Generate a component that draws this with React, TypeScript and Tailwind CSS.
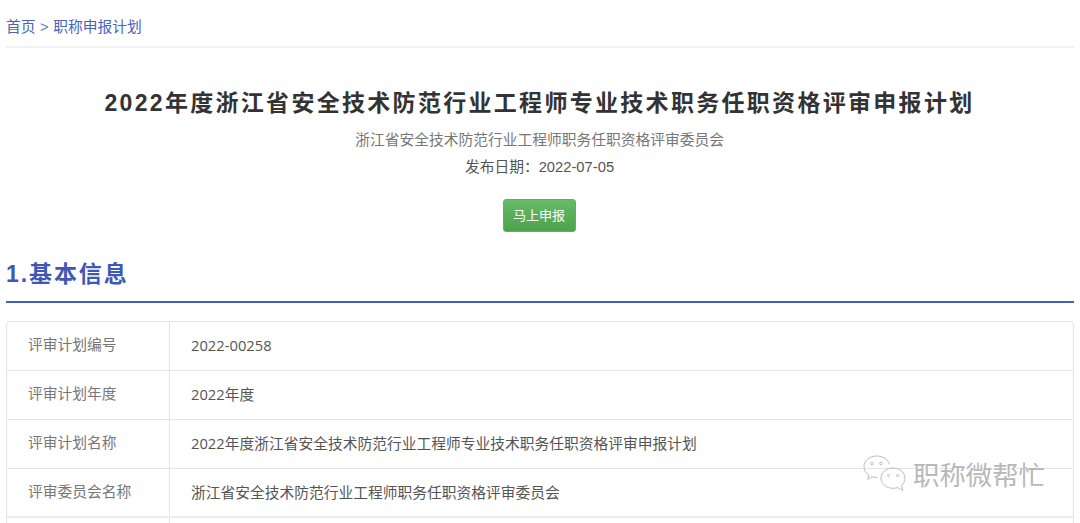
const FONT = "font-['Liberation_Sans','Noto_Sans_CJK_SC',sans-serif]";

const rows: [string, string][] = [
  ["评审计划编号", "2022-00258"],
  ["评审计划年度", "2022年度"],
  ["评审计划名称", "2022年度浙江省安全技术防范行业工程师专业技术职务任职资格评审申报计划"],
  ["评审委员会名称", "浙江省安全技术防范行业工程师职务任职资格评审委员会"],
  ["", ""],
];

function Bubbles() {
  return (
    <svg width="44" height="40" viewBox="0 0 44 40" fill="none" stroke="#bdbdbd" strokeWidth="1">
      <path d="M14.500 24.300C12.800 24.500 11 24.300 9.200 23.800L4.800 26.300L5.800 22C2.600 20 1 17 1 13.500C1 7.500 7 3 13.500 3C19.800 3 25 6.300 26.500 11.300" />
      <path d="M38.500 32.500L40 37.500L34.500 34.600C33 35.100 31.500 35.300 30 35.300C23.500 35.300 18 30.800 18 25.200C18 19.500 23.500 15 30 15C36.500 15 42 19.500 42 25.200C42 28 40.700 30.500 38.500 32.500Z" />
      <circle cx="9" cy="10.500" r="1.300" />
      <circle cx="18" cy="10.500" r="1.300" />
      <circle cx="25.500" cy="22.500" r="1" />
      <circle cx="34.500" cy="22.500" r="1" />
    </svg>
  );
}

export default function App() {
  return (
    <div className={`relative h-[523px] w-[1080px] overflow-hidden bg-white ${FONT}`}>
      <div className="px-[6px]">
        <div className="flex h-[48px] items-start border-b-2 border-[#f2f2f2] pt-[17px] text-[14.75px] leading-[20px] text-[#4a62b8]">
          <span>首页</span>
          <span className="mx-[4.5px] text-[#6f80c4]">&gt;</span>
          <span>职称申报计划</span>
        </div>

        <div className="flex flex-col items-center">
          <h1 className="mt-[41px] mr-[1px] text-[23px] leading-[28px] font-bold tracking-[2.3px] whitespace-nowrap text-[#333333]">
            2022年度浙江省安全技术防范行业工程师专业技术职务任职资格评审申报计划
          </h1>
          <p className="mt-[13px] mr-[1px] text-[14.75px] leading-[20px] text-[#777777]">
            浙江省安全技术防范行业工程师职务任职资格评审委员会
          </p>
          <p className="mt-[7px] mr-[1px] text-[14.75px] leading-[20px] text-[#555555]">发布日期：2022-07-05</p>
          <button className="mt-[22px] mr-[2px] h-[33px] w-[73px] rounded-[3px] border border-[#5cb35c] bg-gradient-to-b from-[#66bb66] to-[#4ba34b] text-[13px] text-white">
            马上申报
          </button>
        </div>

        <h2 className="mt-[27px] h-[42px] text-[23px] leading-[30px] font-bold tracking-[1.9px] text-[#3f57b5]">
          1.基本信息
        </h2>
        <div className="h-[2px] bg-[#4560ba]" />

        <div className="mt-[18px] rounded-t-[4px] border-x border-t border-[#e5e5e5]">
          {rows.map(([label, value], i) => (
            <div
              key={i}
              className={`flex ${i < 3 ? "h-[49px] border-b border-[#e5e5e5]" : i === 3 ? "h-[49px] border-b-2 border-[#ececec]" : "h-[49px]"}`}
            >
              <div className="w-[163px] shrink-0 border-r border-[#e5e5e5] pt-[13px] pl-[21px] text-[14.75px] leading-[20px] text-[#777777]">
                {label}
              </div>
              <div className="pt-[13px] pl-[21px] font-['Open_Sans','Noto_Sans_CJK_SC',sans-serif] text-[14.75px] leading-[20px] text-[#555555]">
                {value}
              </div>
            </div>
          ))}
        </div>
      </div>

      <div className="absolute top-[453px] left-[863px] flex items-center gap-[6px]">
        <Bubbles />
        <span className="relative top-[3px] text-[26.4px] leading-[30px] whitespace-nowrap text-[#b8b8b8] [text-shadow:1px_1px_0_#ffffff]">
          职称微帮忙
        </span>
      </div>
    </div>
  );
}
